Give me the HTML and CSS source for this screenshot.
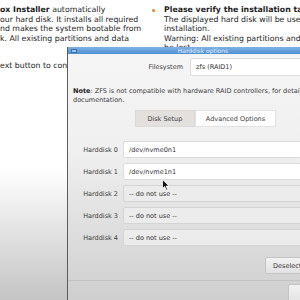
FILE: index.html
```html
<!DOCTYPE html>
<html lang="en">
<head>
  <meta charset="UTF-8">
  <meta name="viewport" content="width=device-width, initial-scale=1.0">
  <title>Proxmox Installer</title>
  <link rel="stylesheet" href="styles.css">
</head>
<body>
  <div class="intro">
    <div class="intro-left">
      <p class="line"><b>ox Installer</b> automatically</p>
      <p class="line">our hard disk. It installs all required</p>
      <p class="line">nd makes the system bootable from</p>
      <p class="line">k. All existing partitions and data</p>
      <p class="line next">ext button to continue the installation.</p>
    </div>
    <div class="intro-right">
      <span class="bullet"></span>
      <div>
        <p class="line"><b>Please verify the installation target</b></p>
        <p class="line">The displayed hard disk will be used for the</p>
        <p class="line">installation.</p>
        <p class="line">Warning: All existing partitions and data will</p>
        <p class="line">be lost.</p>
      </div>
    </div>
  </div>

  <div class="dialog">
    <div class="titlebar">
      <span class="win-icon"></span>
      <span class="title">Harddisk options</span>
    </div>
    <div class="dialog-body">
      <div class="fs-row">
        <label class="fs-label">Filesystem</label>
        <div class="field">zfs (RAID1)</div>
      </div>

      <p class="note"><b>Note</b>: ZFS is not compatible with hardware RAID controllers, for details see the<br>documentation.</p>

      <div class="tabs">
        <span class="tab active">Disk Setup</span>
        <span class="tab">Advanced Options</span>
      </div>

      <div class="disks">
        <div class="disk-row">
          <label class="disk-label">Harddisk 0</label>
          <div class="field">/dev/nvme0n1</div>
        </div>
        <div class="disk-row">
          <label class="disk-label">Harddisk 1</label>
          <div class="field">/dev/nvme1n1</div>
        </div>
        <div class="disk-row">
          <label class="disk-label">Harddisk 2</label>
          <div class="field unused">-- do not use --</div>
        </div>
        <div class="disk-row">
          <label class="disk-label">Harddisk 3</label>
          <div class="field unused">-- do not use --</div>
        </div>
        <div class="disk-row">
          <label class="disk-label">Harddisk 4</label>
          <div class="field unused">-- do not use --</div>
        </div>
      </div>

      <div class="actions">
        <button class="btn">Deselect All</button>
      </div>
      <div class="footer">
        <button class="btn ok">OK</button>
      </div>
    </div>
  </div>

  <svg class="cursor" width="8" height="12" viewBox="0 0 8 12">
    <path d="M0.5 0.5 L0.5 9.5 L2.7 7.6 L4.3 11.2 L5.6 10.6 L4.1 7.1 L7 7.1 Z" fill="#111" stroke="#fff" stroke-width="0.8"/>
  </svg>
</body>
</html>
```

FILE: styles.css
```css
body {
  margin: 0;
  width: 300px;
  height: 300px;
  overflow: hidden;
  position: relative;
  font-family: "DejaVu Sans", sans-serif;
  background: linear-gradient(to bottom, #fff 0, #fff 56%, #c4c4c4 100%);
}
.intro {
  display: flex;
  padding-top: 5px;
  font-size: 7.8px;
  line-height: 9.5px;
  color: #1c1c1c;
}
.line {
  margin: 0;
  white-space: nowrap;
}
.line.next {
  margin-top: 18px;
}
.intro-left {
  flex: none;
  width: 150px;
  overflow: hidden;
}
.intro-right {
  display: flex;
  gap: 9px;
  padding-left: 2px;
}
.bullet {
  width: 3px;
  height: 3px;
  margin-top: 4px;
  border-radius: 50%;
  background: #e8831f;
  flex: none;
}
.dialog {
  position: absolute;
  left: 67px;
  top: 47px;
  width: 270px;
  height: 270px;
  border-left: 1px solid #5c5c5c;
  background: linear-gradient(to bottom, #f6f6f6 0, #efefef 40%, #cbcbcb 100%);
  font-size: 6.5px;
  color: #3c3c3c;
}
.titlebar {
  height: 7px;
  display: flex;
  align-items: center;
  justify-content: center;
  position: relative;
  background: linear-gradient(to bottom, #7fb2e4, #4f8fd2);
}
.win-icon {
  position: absolute;
  left: 3px;
  top: 2px;
  width: 6px;
  height: 4px;
  border: 1px solid #3a6fae;
  background: #9cc4ec;
  box-sizing: border-box;
}
.title {
  color: #e8f0fa;
  font-size: 6px;
}
.dialog-body {
  padding: 4px 0 0 5px;
}
.fs-row {
  display: flex;
  align-items: center;
  gap: 7px;
}
.fs-label {
  width: 110px;
  text-align: right;
}
.field {
  flex: 1;
  height: 18px;
  display: flex;
  align-items: center;
  padding-left: 5px;
  background: #fff;
  border: 1px solid #dcdcdc;
  border-radius: 2px;
  box-sizing: border-box;
  color: #333;
}
.field.unused {
  background: #ececec;
  border-color: #d4d4d4;
}
.note {
  margin: 11px 0 0;
  line-height: 9px;
  white-space: nowrap;
}
.note b {
  font-weight: bold;
  color: #222;
}
.tabs {
  display: flex;
  justify-content: center;
  margin-top: 5px;
}
.tab {
  height: 17px;
  display: flex;
  align-items: center;
  padding: 0 10px;
  background: #fff;
  border: 1px solid #e2e2e2;
  box-sizing: border-box;
}
.tab.active {
  width: 60px;
  justify-content: center;
  background: #e3e0dd;
  border-color: #dcd9d6;
}
.disks {
  display: flex;
  flex-direction: column;
  gap: 5px;
  margin-top: 14px;
}
.disk-row {
  display: flex;
  align-items: center;
  gap: 5px;
}
.disk-label {
  width: 45px;
  text-align: right;
}
.disk-row .field {
  height: 17px;
}
.actions {
  display: flex;
  margin-top: 11px;
  padding-left: 192px;
}
.btn {
  height: 17px;
  padding: 0 7px;
  font-family: "DejaVu Sans", sans-serif;
  font-size: 6.5px;
  color: #333;
  background: linear-gradient(to bottom, #f2f2f2, #e2e2e2);
  border: 1px solid #c4c4c4;
  border-radius: 2px;
  white-space: nowrap;
}
.footer {
  margin: 6px 0 0 -5px;
  padding: 3px 0 0 220px;
  border-top: 1px solid #c2c2c2;
}
.btn.ok {
  height: 20px;
  width: 40px;
}
.cursor {
  position: absolute;
  left: 162px;
  top: 179px;
}
```
